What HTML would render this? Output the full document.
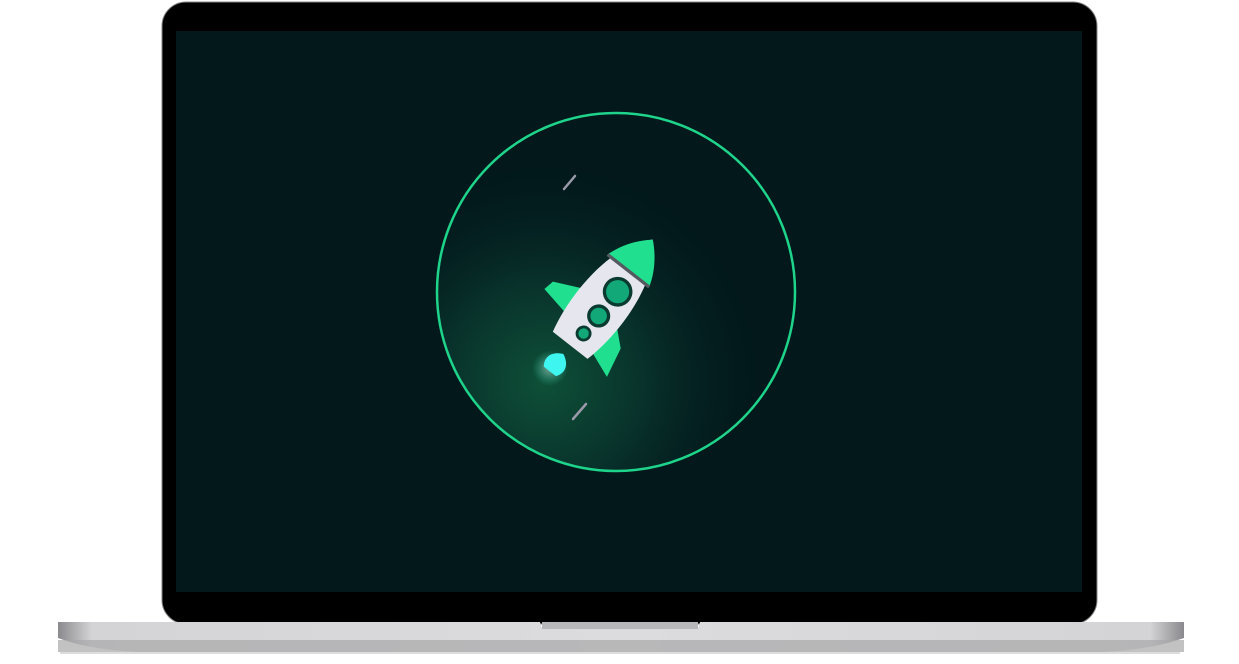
<!DOCTYPE html>
<html><head><style>
html,body{margin:0;padding:0;background:#fff;width:1239px;height:664px;overflow:hidden}
</style></head><body>
<svg width="1239" height="664" viewBox="0 0 1239 664" xmlns="http://www.w3.org/2000/svg">
<defs>
<radialGradient id="glow" cx="0.3" cy="0.75" r="0.65">
<stop offset="0" stop-color="#0e5038"/>
<stop offset="0.45" stop-color="#08302a"/>
<stop offset="1" stop-color="#02181b" stop-opacity="0"/>
</radialGradient>
<linearGradient id="base" x1="0" y1="0" x2="1" y2="0">
<stop offset="0" stop-color="#8a8a8e"/>
<stop offset="0.03" stop-color="#d4d4d6"/>
<stop offset="0.5" stop-color="#dcdcde"/>
<stop offset="0.97" stop-color="#d4d4d6"/>
<stop offset="1" stop-color="#8a8a8e"/>
</linearGradient>
<radialGradient id="flame" cx="0.5" cy="0.5" r="0.5">
<stop offset="0" stop-color="#ffffff" stop-opacity="0.5"/>
<stop offset="1" stop-color="#2fffd0" stop-opacity="0"/>
</radialGradient>
</defs>
<rect x="162" y="2" width="935" height="622" rx="24" fill="#000" stroke="#888" stroke-width="1"/>
<rect x="176" y="31" width="906" height="561" fill="#02181b"/>
<circle cx="616" cy="292" r="179" fill="url(#glow)"/>
<circle cx="616" cy="292" r="179" fill="none" stroke="#1ed48a" stroke-width="2.5"/>
<line x1="564" y1="189" x2="575" y2="176" stroke="#99a" stroke-width="2.5" stroke-linecap="round"/>
<line x1="573" y1="419" x2="586" y2="404" stroke="#99a" stroke-width="2.5" stroke-linecap="round"/>
<circle cx="550" cy="368" r="18" fill="url(#flame)"/>
<g transform="translate(604,302) rotate(38) scale(1.1)">
<path d="M-7,80 C-13,72 -9,64 0,60 C9,64 13,72 7,80 Z" fill="#3ff5f0"/>
<path d="M-18,0 L-48,14 L-50,24 L-18,30 Z" fill="#20e08f"/>
<path d="M18,6 L38,24 L44,52 L18,42 Z" fill="#20e08f"/>
<path d="M0,-72 C26,-48 30,10 20,50 L-20,50 C-30,10 -26,-48 0,-72 Z" fill="#e6e6ee"/>
<path d="M0,-72 C14,-60 21,-46 24,-36 L-24,-36 C-21,-46 -14,-60 0,-72 Z" fill="#20e08f"/>
<path d="M-24,-36 L24,-36" stroke="#555a60" stroke-width="3"/>
<circle cx="4" cy="-15" r="12" fill="#12a878" stroke="#0a3a30" stroke-width="3"/>
<circle cx="4" cy="13" r="9" fill="#12a878" stroke="#0a3a30" stroke-width="3"/>
<circle cx="3" cy="34" r="6" fill="#12a878" stroke="#0a3a30" stroke-width="2.5"/>
</g>
<path d="M58,622 L540,622 L542,629 L698,629 L700,622 L1184,622 L1184,638 Q1150,650 1100,652 L140,652 Q90,650 58,638 Z" fill="url(#base)"/>
<rect x="542" y="622" width="156" height="7" fill="#b8b8ba"/>
<rect x="58" y="640" width="1126" height="12" fill="#a8a8aa" opacity="0.7"/>
<rect x="60" y="652" width="1120" height="2" fill="#ddd"/>
</svg>
</body></html>
